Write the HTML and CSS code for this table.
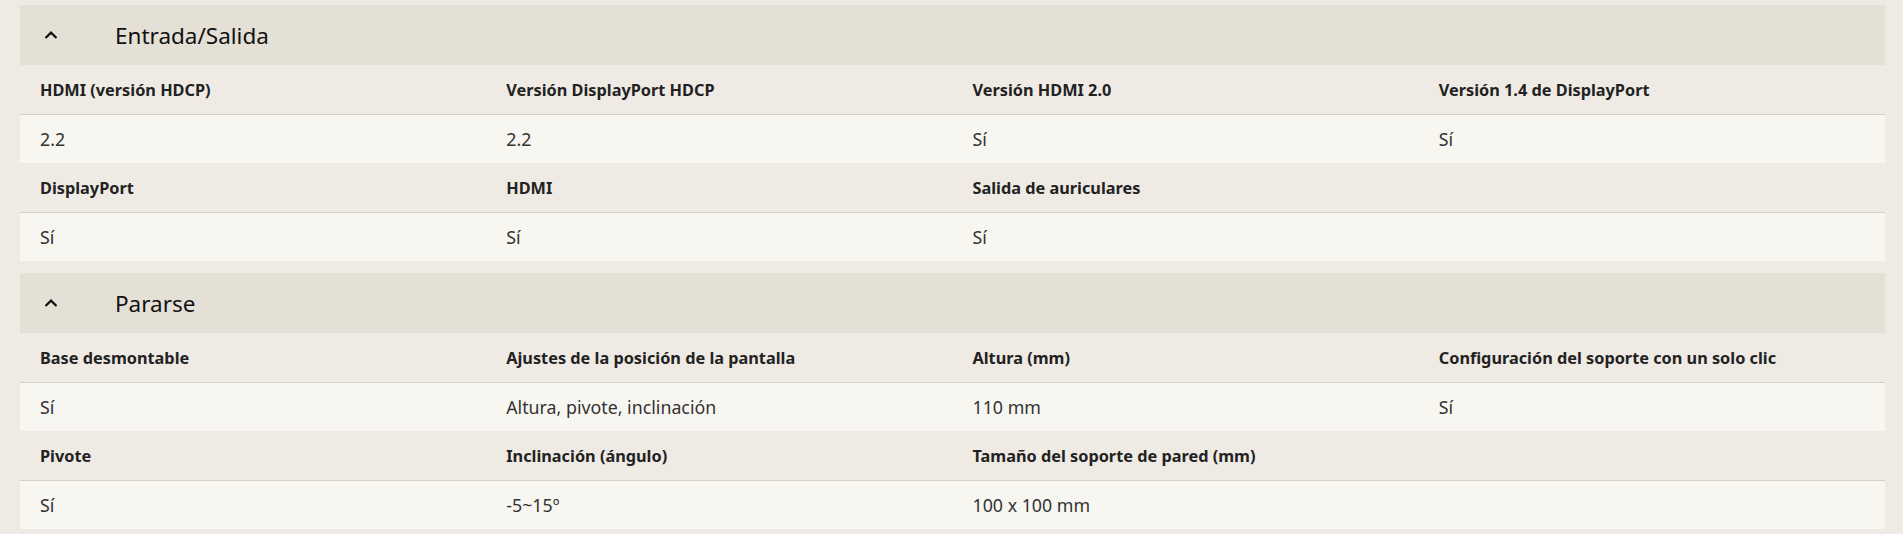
FILE: index.html
```html
<!DOCTYPE html>
<html lang="es">
<head>
<meta charset="utf-8">
<title>Especificaciones</title>
<link rel="stylesheet" href="styles.css">
</head>
<body>
<div class="specs">
  <section class="group">
    <div class="group-head">
      <svg class="chev" width="14" height="8" viewBox="0 0 14 8"><path d="M1.5 7 L7 1.6 L12.5 7" fill="none" stroke="#111" stroke-width="2.2"/></svg>
      <h2 class="group-title">Entrada/Salida</h2>
    </div>
    <div class="row labels">
      <div class="cell">HDMI (versión HDCP)</div>
      <div class="cell">Versión DisplayPort HDCP</div>
      <div class="cell">Versión HDMI 2.0</div>
      <div class="cell">Versión 1.4 de DisplayPort</div>
    </div>
    <div class="row values">
      <div class="cell">2.2</div>
      <div class="cell">2.2</div>
      <div class="cell">Sí</div>
      <div class="cell">Sí</div>
    </div>
    <div class="row labels">
      <div class="cell">DisplayPort</div>
      <div class="cell">HDMI</div>
      <div class="cell">Salida de auriculares</div>
      <div class="cell"></div>
    </div>
    <div class="row values">
      <div class="cell">Sí</div>
      <div class="cell">Sí</div>
      <div class="cell">Sí</div>
      <div class="cell"></div>
    </div>
  </section>
  <section class="group">
    <div class="group-head">
      <svg class="chev" width="14" height="8" viewBox="0 0 14 8"><path d="M1.5 7 L7 1.6 L12.5 7" fill="none" stroke="#111" stroke-width="2.2"/></svg>
      <h2 class="group-title">Pararse</h2>
    </div>
    <div class="row labels">
      <div class="cell">Base desmontable</div>
      <div class="cell">Ajustes de la posición de la pantalla</div>
      <div class="cell">Altura (mm)</div>
      <div class="cell">Configuración del soporte con un solo clic</div>
    </div>
    <div class="row values">
      <div class="cell">Sí</div>
      <div class="cell">Altura, pivote, inclinación</div>
      <div class="cell">110 mm</div>
      <div class="cell">Sí</div>
    </div>
    <div class="row labels">
      <div class="cell">Pivote</div>
      <div class="cell">Inclinación (ángulo)</div>
      <div class="cell">Tamaño del soporte de pared (mm)</div>
      <div class="cell"></div>
    </div>
    <div class="row values">
      <div class="cell">Sí</div>
      <div class="cell">-5~15º</div>
      <div class="cell">100 x 100 mm</div>
      <div class="cell"></div>
    </div>
  </section>
</div>
</body>
</html>
```

FILE: styles.css
```css
html, body {
  margin: 0;
  padding: 0;
  background: #efebe4;
}
body {
  font-family: "Noto Sans", "Open Sans", sans-serif;
  color: #222;
}
.specs {
  margin: 5px 18px 0 20px;
  display: flex;
  flex-direction: column;
  gap: 12px;
}
.group-head {
  height: 60px;
  background: #e4e0d6;
  display: flex;
  align-items: center;
  padding-left: 24px;
}
.chev {
  display: block;
  margin-right: 57px;
}
.group-title {
  margin: 0;
  font-size: 22.5px;
  font-weight: 400;
  color: #111;
}
.row {
  display: grid;
  grid-template-columns: repeat(4, 1fr);
}
.row.labels {
  height: 50px;
  box-sizing: border-box;
  border-bottom: 1px solid #d5cfc7;
  background: #efebe4;
}
.row.values {
  height: 48px;
  background: #f8f6f1;
}
.cell {
  display: flex;
  align-items: center;
  padding-left: 20px;
}
.labels .cell {
  font-size: 16.3px;
  font-weight: 700;
  color: #222;
}
.values .cell {
  font-size: 17.8px;
  font-weight: 400;
  color: #333;
}
```
